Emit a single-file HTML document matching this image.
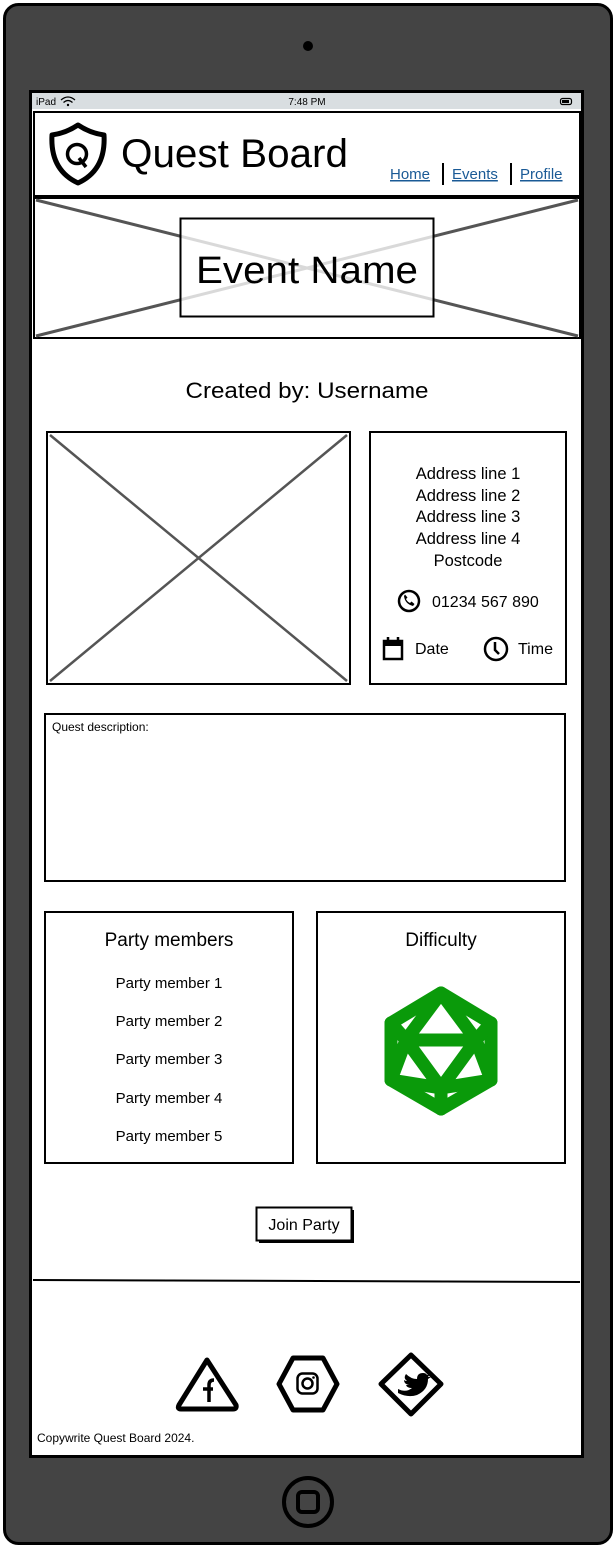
<!DOCTYPE html>
<html><head><meta charset="utf-8"><style>
html,body{margin:0;padding:0;background:#fff;width:616px;height:1548px;overflow:hidden}
svg{display:block}
text{font-family:"Liberation Sans",sans-serif;fill:#000}
text.lnk{fill:#1a5a96;text-decoration:underline}
</style></head><body>
<svg width="616" height="1548" viewBox="0 0 616 1548" xmlns="http://www.w3.org/2000/svg">
<rect x="4.5" y="4.5" width="607" height="1539" rx="14" fill="#444" stroke="#000" stroke-width="3"/>
<circle cx="308" cy="46" r="5" fill="#000"/>
<rect x="30.5" y="91.5" width="552" height="1365" fill="#fff" stroke="#000" stroke-width="3"/>
<rect x="32" y="93" width="549" height="16" fill="#d9dee1"/>
<text x="36" y="105" font-size="10">iPad</text>
<path d="M61,100 q7,-6 14,0 M63.5,102.5 q4.5,-4 9,0" stroke="#000" stroke-width="1.2" fill="none"/>
<circle cx="68" cy="105" r="1.2" fill="#000"/>
<text x="307" y="105" font-size="10" text-anchor="middle">7:48 PM</text>
<rect x="560.5" y="98.5" width="11" height="6" rx="2" fill="none" stroke="#000" stroke-width="1.2"/>
<rect x="562" y="100" width="7" height="3" fill="#000"/>
<rect x="34" y="112" width="546" height="84" fill="#fff" stroke="#000" stroke-width="2"/>
<path d="M78,125 Q90,133 104,135 Q106,170 78,183 Q50,170 52,135 Q66,133 78,125Z" fill="none" stroke="#000" stroke-width="5" stroke-linejoin="round"/>
<circle cx="77" cy="154" r="9.5" fill="none" stroke="#000" stroke-width="3.5"/>
<path d="M79,158 L86,167" stroke="#000" stroke-width="3.5"/>
<text x="121" y="167" font-size="40" textLength="227" lengthAdjust="spacingAndGlyphs">Quest Board</text>
<text class="lnk" x="390" y="179" font-size="15">Home</text>
<text class="lnk" x="452" y="179" font-size="15">Events</text>
<text class="lnk" x="520" y="179" font-size="15">Profile</text>
<path d="M443,163v22M511,163v22" stroke="#000" stroke-width="2"/>
<rect x="34" y="198" width="546" height="140" fill="#fff" stroke="#000" stroke-width="2"/>
<path d="M36,200 L578,336 M36,336 L578,200" stroke="#555" stroke-width="3"/>
<rect x="180.5" y="218.5" width="253" height="98" fill="#fff" fill-opacity="0.78" stroke="#000" stroke-width="2"/>
<text x="307" y="283" font-size="38" text-anchor="middle" textLength="222" lengthAdjust="spacingAndGlyphs">Event Name</text>
<text x="307" y="398" font-size="22" text-anchor="middle" textLength="243" lengthAdjust="spacingAndGlyphs">Created by: Username</text>
<rect x="47" y="432" width="303" height="252" fill="#fff" stroke="#000" stroke-width="2"/>
<path d="M50,435 L347,681 M50,681 L347,435" stroke="#555" stroke-width="2.5"/>
<rect x="370" y="432" width="196" height="252" fill="#fff" stroke="#000" stroke-width="2"/>
<g font-size="16.5" text-anchor="middle">
<text x="468" y="479">Address line 1</text>
<text x="468" y="501">Address line 2</text>
<text x="468" y="522">Address line 3</text>
<text x="468" y="544">Address line 4</text>
<text x="468" y="566">Postcode</text>
</g>
<circle cx="409" cy="601" r="10" fill="none" stroke="#000" stroke-width="2.5"/>
<path d="M404,596 q1,8 9,10 l1.5,-2 -3,-2.5 -1.5,1.5 q-3,-1.5 -4,-4 l1.5,-1.5 -2.5,-3Z" fill="#000"/>
<text x="432" y="607" font-size="16">01234 567 890</text>
<rect x="384" y="641" width="18" height="18" fill="none" stroke="#000" stroke-width="2.5"/>
<rect x="384" y="641" width="18" height="5" fill="#000"/>
<path d="M388,637v5M398,637v5" stroke="#000" stroke-width="2.5"/>
<text x="415" y="654" font-size="16">Date</text>
<circle cx="496" cy="649" r="11" fill="none" stroke="#000" stroke-width="2.5"/>
<path d="M495,642v8l4,4" fill="none" stroke="#000" stroke-width="2.5"/>
<text x="518" y="654" font-size="16">Time</text>
<rect x="45" y="714" width="520" height="167" fill="#fff" stroke="#000" stroke-width="2"/>
<text x="52" y="731" font-size="12">Quest description:</text>
<rect x="45" y="912" width="248" height="251" fill="#fff" stroke="#000" stroke-width="2"/>
<text x="169" y="946" font-size="19" text-anchor="middle">Party members</text>
<g font-size="15" text-anchor="middle">
<text x="169" y="988">Party member 1</text>
<text x="169" y="1026">Party member 2</text>
<text x="169" y="1064">Party member 3</text>
<text x="169" y="1103">Party member 4</text>
<text x="169" y="1141">Party member 5</text>
</g>
<rect x="317" y="912" width="248" height="251" fill="#fff" stroke="#000" stroke-width="2"/>
<text x="441" y="946" font-size="19" text-anchor="middle">Difficulty</text>
<g stroke="#0a9a0a" stroke-width="13" fill="none" stroke-linejoin="round" stroke-linecap="round">
<path d="M441,993 L491,1023 L491,1080 L441,1109 L391,1080 L391,1023Z"/>
<path d="M441,993 L406,1040 L476,1040Z M406,1040 L441,1088 L476,1040 M441,1088 L441,1109 M441,1088 L391,1080 M441,1088 L491,1080 M406,1040 L391,1023 M406,1040 L391,1080 M476,1040 L491,1023 M476,1040 L491,1080"/>
</g>
<rect x="259" y="1210" width="95" height="33" fill="#000"/>
<rect x="256.5" y="1207.5" width="95" height="33" fill="#fff" stroke="#000" stroke-width="2"/>
<text x="304" y="1230" font-size="16" text-anchor="middle">Join Party</text>
<path d="M33,1280 L580,1282" stroke="#000" stroke-width="2"/>
<path d="M207,1360 L236,1405 Q237,1409 233,1409 L181,1409 Q177,1409 179,1405Z" fill="none" stroke="#000" stroke-width="5" stroke-linejoin="round"/>
<path d="M209,1402v-17q0,-5 5,-5M203,1389h10" fill="none" stroke="#000" stroke-width="3.5"/>
<path d="M293,1358 L323,1358 L337,1384 L323,1410 L293,1410 L279,1384Z" fill="none" stroke="#000" stroke-width="5" stroke-linejoin="round"/>
<rect x="297.5" y="1373.5" width="20" height="20" rx="5" fill="none" stroke="#000" stroke-width="2.5"/>
<circle cx="307.5" cy="1383.5" r="5" fill="none" stroke="#000" stroke-width="2.5"/>
<circle cx="313.5" cy="1377.5" r="1.3" fill="#000"/>
<path d="M411,1355 L441,1384 L411,1414 L381,1384Z" fill="none" stroke="#000" stroke-width="5" stroke-linejoin="round"/>
<path d="M398,1389 q8,4 14,-1 q-5,0 -6,-3 q2,0 3,0 q-5,-1 -5,-5 q1,1 3,1 q-4,-3 -1,-7 q5,5 11,5 q0,-6 6,-6 q3,0 4,2 l3,-1 -2,3 3,0 -3,2 q0,11 -11,16 q-9,3 -19,-2Z" fill="#000"/>
<text x="37" y="1442" font-size="12">Copywrite Quest Board 2024.</text>
<circle cx="308" cy="1502" r="24" fill="none" stroke="#000" stroke-width="4"/>
<rect x="298" y="1492" width="20" height="20" rx="4" fill="none" stroke="#000" stroke-width="4"/>
</svg>
</body></html>
